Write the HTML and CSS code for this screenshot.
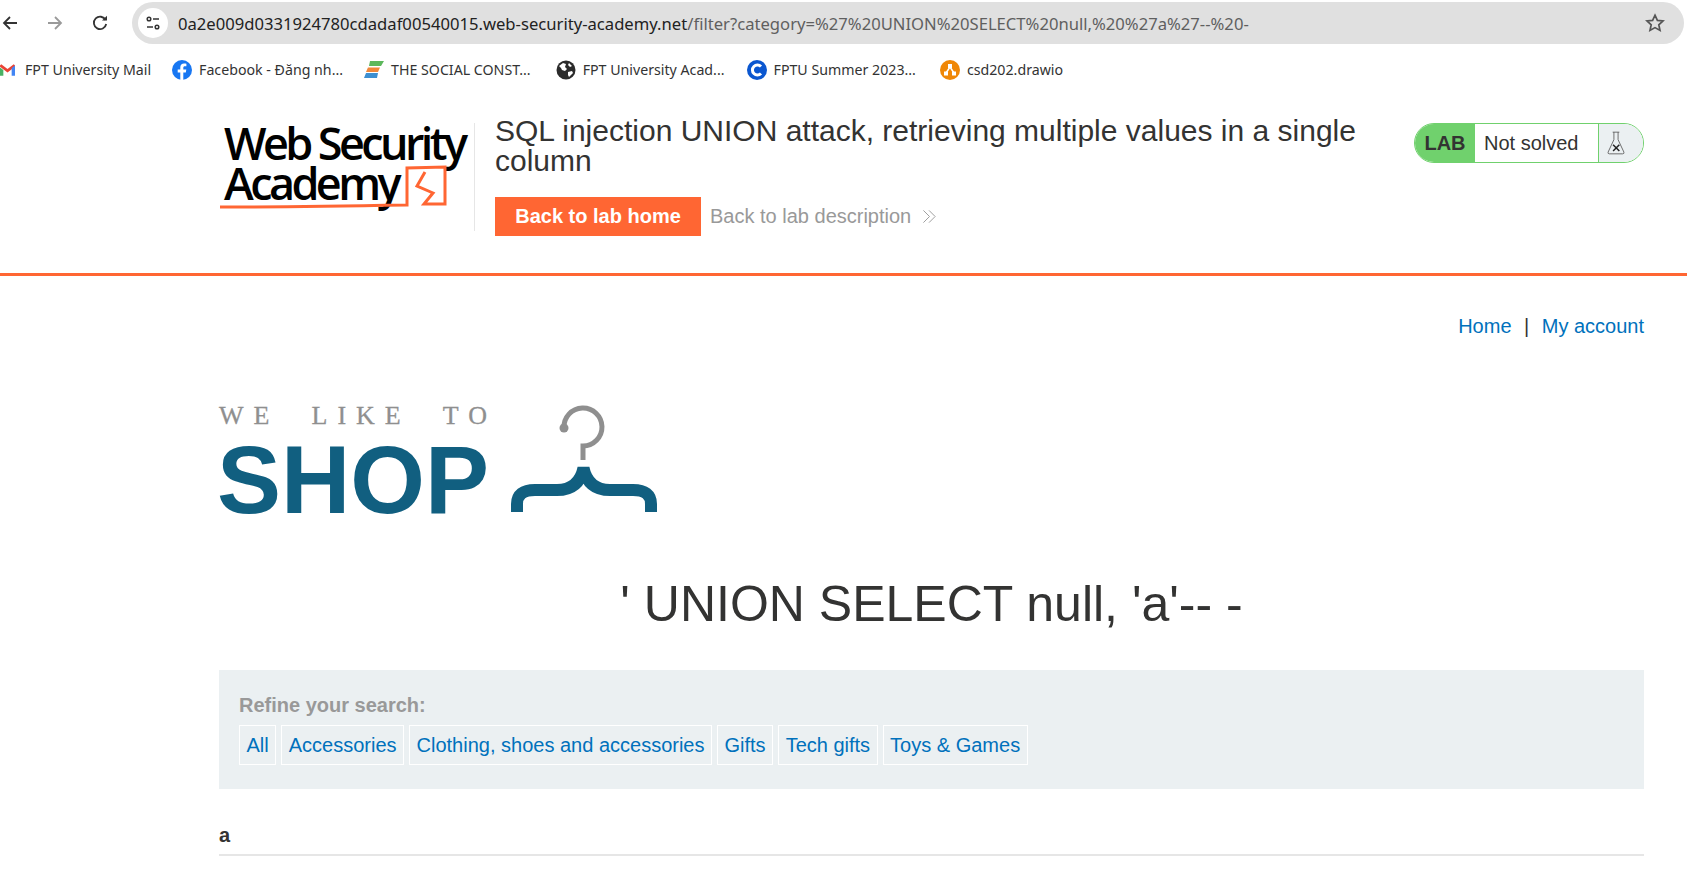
FILE: index.html
```html
<!DOCTYPE html>
<html lang="en">
<head>
    <meta charset="UTF-8">
    <meta name="viewport" content="width=device-width, initial-scale=1.0">
    <title>SQL injection UNION attack, retrieving multiple values in a single column</title>
    <link rel="stylesheet" href="styles.css">
</head>
<body>

    <!-- Browser toolbar -->
    <div class="toolbar">
        <svg class="nav-icon nav-back" viewBox="0 0 16 16"><path d="M15 8H2M8 2L2 8l6 6"/></svg>
        <svg class="nav-icon nav-forward" viewBox="0 0 16 16"><path d="M1 8h13M8 2l6 6-6 6"/></svg>
        <svg class="nav-icon nav-reload" viewBox="0 0 16 16"><path d="M13.6 5A6.2 6.2 0 1 0 14.2 9"/><path class="solid" d="M10 5.6h5V.8z"/></svg>
        <div class="address-bar">
            <span class="site-info">
                <svg viewBox="0 0 16 16"><circle cx="4" cy="4" r="1.8"/><path d="M8 4h6M2 12h6"/><circle cx="12" cy="12" r="1.8"/></svg>
            </span>
            <span class="url"><span class="url-host">0a2e009d0331924780cdadaf00540015.web-security-academy.net</span>/filter?category=%27%20UNION%20SELECT%20null,%20%27a%27--%20-</span>
            <svg class="star" viewBox="0 0 20 20"><path d="M10 2.2l2.4 5.2 5.6.6-4.2 3.8 1.2 5.6L10 14.6l-5 2.8 1.2-5.6L2 8l5.6-.6z"/></svg>
        </div>
    </div>

    <!-- Bookmarks -->
    <div class="bookmarks">
        <span class="bookmark bm-mail">
            <svg viewBox="0 0 18 14"><path fill="#ea4335" d="M0 3l9 7 9-7V1.5L16.5 0 9 5.8 1.500 0 0 1.500z"/><path fill="#4285f4" d="M14 4.700l4-3.100V14h-4z"/><path fill="#34a853" d="M0 4v10h4V7z" opacity=".9"/></svg>
            FPT University Mail
        </span>
        <span class="bookmark">
            <svg viewBox="0 0 20 20"><circle cx="10" cy="10" r="10" fill="#1877f2"/><path fill="#fff" d="M11.300 20v-7.500h2.500l.5-3h-3V7.800c0-.9.400-1.500 1.600-1.500h1.500V3.700c-.5-.1-1.400-.2-2.300-.2-2.400 0-3.800 1.400-3.800 3.900v2.100H5.700v3h2.600V20z"/></svg>
            Facebook - Đăng nh...
        </span>
        <span class="bookmark">
            <svg viewBox="0 0 20 20"><path fill="#5cb85c" d="M6 1h14l-3 5H5z"/><path fill="#f0873a" d="M4 7.500h12l-2 4.500H2z"/><path fill="#3d8fd1" d="M2 13h12l-1 5H0z"/></svg>
            THE SOCIAL CONST...
        </span>
        <span class="bookmark bm-globe">
            <svg viewBox="0 0 20 20"><circle cx="10" cy="10" r="9.500" fill="#2b2b2b"/><path fill="#fff" d="M3 6l4-3 3 1-1 3 2 2-2 2-3-1-1-2zM12 12l4-1 1 2-4 4-1-2zM13 3l3 3-2 1-2-2z"/></svg>
            FPT University Acad...
        </span>
        <span class="bookmark bm-summer">
            <svg viewBox="0 0 20 20"><circle cx="10" cy="10" r="10" fill="#0b57d0"/><path fill="none" stroke="#fff" stroke-width="3" d="M14 6.500a5 5 0 1 0 0 7"/></svg>
            FPTU Summer 2023...
        </span>
        <span class="bookmark bm-drawio">
            <svg viewBox="0 0 20 20"><circle cx="10" cy="10" r="10" fill="#f08705"/><path fill="none" stroke="#fff" stroke-width="1.500" d="M10 7L6 13M10 7l4 6"/><g fill="#fff"><rect x="8" y="4" width="4" height="4"/><rect x="4" y="11.500" width="4" height="4"/><rect x="12" y="11.500" width="4" height="4"/></g></svg>
            csd202.drawio
        </span>
    </div>

    <!-- Academy lab header -->
    <header class="lab-header">
        <div class="academy-logo">
            <span class="academy-word">Web Security</span>
            <span class="academy-word">Academy</span>
            <svg class="academy-mark" viewBox="0 0 256 96">
                <path d="M1 84C60 84 130 83 188 82L188 45 226 44 226 81 205 81 214 70 198 63 206 49"/>
            </svg>
        </div>
        <div class="lab-title">
            <h2>SQL injection UNION attack, retrieving multiple values in a single column</h2>
            <div class="lab-links">
                <a class="button-orange" href="#">Back to lab home</a>
                <a class="link-back" href="#">Back to lab description
                    <svg viewBox="0 0 16 16"><path d="M1.500 1.500L8 8l-6.500 6.500M7.500 1.500L14 8l-6.500 6.500"/></svg>
                </a>
            </div>
        </div>
        <div class="lab-status">
            <span class="status-tag">LAB</span>
            <span class="status-text">Not solved</span>
            <span class="status-icon">
                <svg viewBox="0 0 24 30"><path d="M8 2h8M9.500 2v9L2.500 26q-.5 2 1.500 2h16q2 0 1.500-2L14.500 11V2M5 21"/><path class="flask-x" d="M8.500 17l7.500 7.500M16 17l-7.500 7.500"/></svg>
            </span>
        </div>
    </header>

    <!-- Shop page -->
    <main class="page">
        <nav class="top-links">
            <a href="#">Home</a><span class="pipe">|</span><a href="#">My account</a>
        </nav>

        <div class="shop-logo">
            <div class="shop-words">
                <div class="shop-tagline">
                    <span>WE</span>
                    <span>LIKE</span>
                    <span>TO</span>
                </div>
                <span class="shop-name">SHOP</span>
            </div>
            <svg class="hanger" viewBox="0 0 146 110">
                <circle class="hanger-dot" cx="53" cy="24" r="4.500"/>
                <path class="hanger-hook" d="M53 24A19 19 0 1 1 72 42V56"/>
                <path class="hanger-bar" d="M6 108V100Q6 86 24 86H46Q68 86 72.500 64Q77 86 99 86H122Q140 86 140 100V108"/>
            </svg>
        </div>

        <h1 class="search-title">' UNION SELECT null, 'a'-- -</h1>

        <section class="filter-box">
            <p class="filter-label">Refine your search:</p>
            <div class="filter-tags">
                <a href="#">All</a>
                <a href="#">Accessories</a>
                <a href="#">Clothing, shoes and accessories</a>
                <a href="#">Gifts</a>
                <a href="#">Tech gifts</a>
                <a href="#">Toys &amp; Games</a>
            </div>
        </section>

        <table class="results">
            <tr><th>a</th></tr>
        </table>
    </main>

</body>
</html>
```

FILE: styles.css
```css
html, body {
    height: 100%;
}

body {
    margin: 0;
    background: #fff;
    color: #333332;
    font-family: "Liberation Sans", Arial, sans-serif;
    font-size: 20px;
    overflow: hidden;
}

a {
    color: #0071bc;
    text-decoration: none;
}

/* Browser toolbar */
.toolbar {
    display: flex;
    align-items: center;
    box-sizing: border-box;
    height: 48px;
    padding: 2px 3px 4px 2px;
}

.nav-icon {
    flex: none;
    width: 16px;
    height: 16px;
    margin-right: 29px;
    fill: none;
    stroke: #333;
    stroke-width: 1.800;
}

.nav-forward {
    stroke: #9a9a9a;
}

.nav-reload {
    margin-right: 24px;
}

.nav-reload .solid {
    fill: #333;
    stroke: none;
}

.address-bar {
    flex: 1;
    display: flex;
    align-items: center;
    height: 42px;
    padding: 0 19px 0 6px;
    border-radius: 21px;
    background: #e0e0e0;
}

.site-info {
    display: flex;
    align-items: center;
    justify-content: center;
    flex: none;
    width: 30px;
    height: 30px;
    border-radius: 50%;
    background: #fff;
}

.site-info svg {
    width: 16px;
    height: 16px;
    fill: none;
    stroke: #333;
    stroke-width: 1.500;
}

.url {
    flex: 1;
    margin-left: 10px;
    color: #5f5f5f;
    font-family: "Noto Sans", sans-serif;
    font-size: 16.640px;
    white-space: nowrap;
}

.url-host {
    color: #222;
}

.star {
    flex: none;
    width: 20px;
    height: 20px;
    fill: none;
    stroke: #555;
    stroke-width: 1.700;
}

/* Bookmarks */
.bookmarks {
    display: flex;
    align-items: center;
    gap: 21px;
    height: 43px;
    color: #333;
    font-family: "Noto Sans", sans-serif;
    font-size: 14.200px;
}

.bookmark {
    display: flex;
    align-items: center;
    gap: 7px;
    white-space: nowrap;
}

.bookmark svg {
    flex: none;
    width: 20px;
    height: 20px;
}

.bm-mail {
    gap: 10px;
}

.bm-mail svg {
    width: 15px;
    height: 14px;
}

.bm-globe {
    margin-left: 4px;
}

.bm-summer {
    margin-left: 1px;
}

.bm-drawio {
    margin-left: 3px;
}

/* Academy lab header */
.lab-header {
    display: flex;
    align-items: flex-start;
    box-sizing: border-box;
    height: 185px;
    padding: 32px 43px 0 219px;
    border-bottom: 3px solid #ff6633;
}

.academy-logo {
    position: relative;
    display: flex;
    flex-direction: column;
    flex: none;
    box-sizing: border-box;
    width: 256px;
    height: 108px;
    padding-left: 5px;
    border-right: 1px solid #e6e6e6;
    color: #000;
    font-family: "Open Sans", sans-serif;
    font-weight: 600;
}

.academy-word {
    font-size: 45px;
    line-height: 40px;
    letter-spacing: -3.600px;
    white-space: nowrap;
}

.academy-mark {
    position: absolute;
    top: 0;
    left: 0;
    width: 256px;
    height: 96px;
    fill: none;
    stroke: #ff6633;
    stroke-width: 3;
}

.lab-title {
    flex: 1;
    margin-left: 20px;
}

.lab-title h2 {
    margin: -7px 0 0;
    font-size: 30px;
    font-weight: 400;
    line-height: 30px;
}

.lab-links {
    display: flex;
    align-items: center;
    margin-top: 21px;
}

.button-orange {
    box-sizing: border-box;
    width: 206px;
    height: 39px;
    background: #ff6633;
    color: #fff;
    font-weight: 700;
    line-height: 39px;
    text-align: center;
}

.link-back {
    display: flex;
    align-items: center;
    gap: 11px;
    margin-left: 9px;
    color: #999;
}

.link-back svg {
    width: 15px;
    height: 15px;
    fill: none;
    stroke: #999;
    stroke-width: 1;
}

.lab-status {
    display: flex;
    flex: none;
    box-sizing: border-box;
    width: 230px;
    height: 40px;
    margin-left: 58px;
    border: 1px solid #70d16d;
    border-radius: 20px;
    overflow: hidden;
}

.status-tag {
    width: 60px;
    background: #70d16d;
    font-weight: 700;
    line-height: 38px;
    text-align: center;
}

.status-text {
    width: 124px;
    padding-left: 9px;
    box-sizing: border-box;
    border-right: 1px solid #70d16d;
    line-height: 38px;
}

.status-icon {
    display: flex;
    flex: 1;
    align-items: center;
    padding-left: 7px;
    background: #ebf0f2;
}

.status-icon svg {
    width: 20px;
    height: 26px;
    fill: none;
    stroke: #555;
    stroke-width: 1;
}

.status-icon .flask-x {
    stroke: #222;
    stroke-width: 1.800;
}

/* Shop page */
.page {
    padding: 0 43px 0 219px;
}

.top-links {
    display: flex;
    justify-content: flex-end;
    margin-top: 39px;
    line-height: 23px;
}

.pipe {
    margin: 0 12.500px;
    color: #333;
}

.shop-logo {
    display: flex;
    align-items: flex-start;
    margin-top: 66px;
}

.shop-words {
    display: flex;
    flex-direction: column;
    width: 292px;
}

.shop-tagline {
    display: flex;
    justify-content: space-between;
    width: 278px;
    color: #8f8f8f;
    font-family: "Liberation Serif", serif;
    font-size: 26px;
    line-height: 24px;
    letter-spacing: 10px;
    -webkit-text-stroke: .3px #8f8f8f;
    white-space: nowrap;
}

.shop-name {
    margin-top: 6px;
    margin-left: -2px;
    color: #115f80;
    font-size: 96px;
    font-weight: 700;
    line-height: 92px;
}

.hanger {
    flex: none;
    width: 146px;
    height: 110px;
    fill: none;
}

.hanger-dot {
    fill: #8f8f8f;
}

.hanger-hook {
    stroke: #8f8f8f;
    stroke-width: 5;
}

.hanger-bar {
    stroke: #115f80;
    stroke-width: 12;
}

.search-title {
    margin: 51px 0 0;
    font-size: 50px;
    font-weight: 400;
    line-height: 55px;
    text-align: center;
}

.filter-box {
    box-sizing: border-box;
    height: 119px;
    margin-top: 38px;
    padding: 23px 20px 0;
    background: #ebf0f2;
}

.filter-label {
    margin: 0;
    color: #999;
    font-weight: 700;
    line-height: 24px;
}

.filter-tags {
    display: flex;
    gap: 5px;
    margin-top: 8px;
}

.filter-tags a {
    box-sizing: border-box;
    height: 40px;
    padding: 0 6.500px;
    border: 1px solid #fff;
    line-height: 38px;
    white-space: nowrap;
}

.results {
    width: 100%;
    margin-top: 35px;
    border-collapse: collapse;
}

.results th {
    padding: 0 0 7px;
    border-bottom: 2px solid #e6e6e6;
    font-size: 20px;
    line-height: 23px;
    text-align: left;
}
```
